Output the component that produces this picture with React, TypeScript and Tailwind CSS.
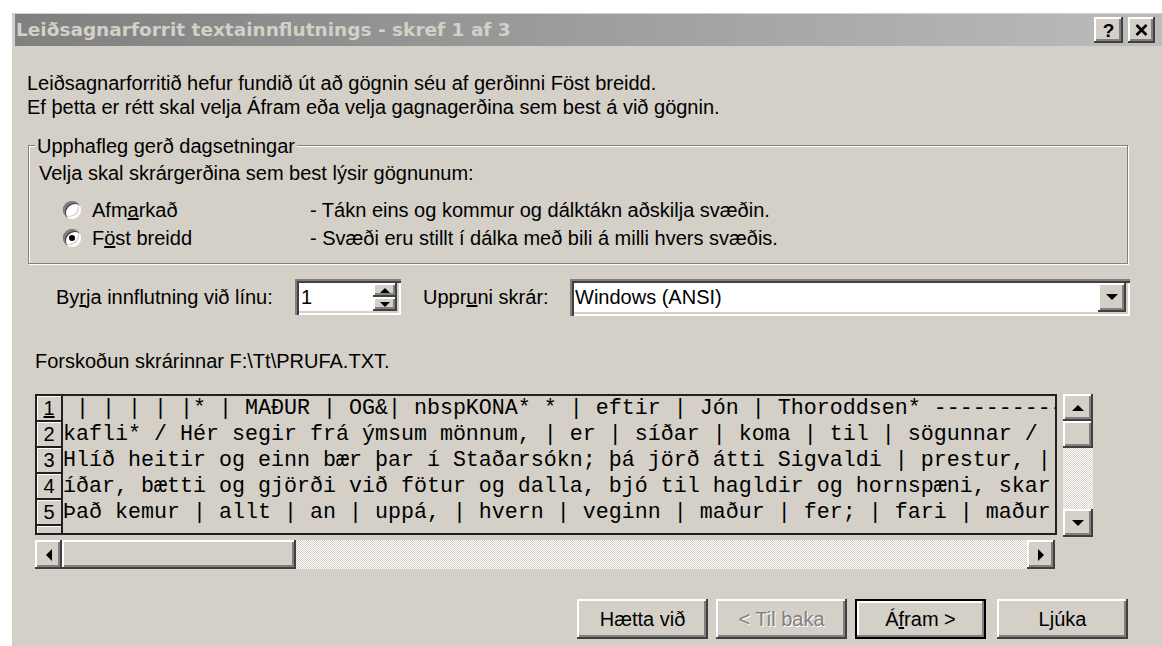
import type { ReactNode } from "react";

const sans = "font-['Liberation_Sans',Arial,sans-serif]";
const mono = "font-['Liberation_Mono','Courier_New',monospace]";

// classic 3D bevels
const raised = "bg-[#d4d0c8] shadow-[inset_-2px_-2px_0_#404040,inset_2px_2px_0_#ffffff,inset_-4px_-4px_0_#808080]";
const sunken = "bg-white shadow-[inset_2px_2px_0_#808080,inset_4px_4px_0_#404040,inset_-2px_-2px_0_#ffffff,inset_-4px_-4px_0_#d4d0c8]";
const dither = "bg-[repeating-conic-gradient(#ffffff_0_25%,#d4d0c8_0_50%)] bg-[length:2px_2px]";

const previewRows = [
  " | | | | |* | MAÐUR | OG&| nbspKONA* * | eftir | Jón | Thoroddsen* --------------",
  "kafli* / Hér segir frá ýmsum mönnum, | er | síðar | koma | til | sögunnar /  ",
  "Hlíð heitir og einn bær þar í Staðarsókn; þá jörð átti Sigvaldi | prestur, | a",
  "íðar, bætti og gjörði við fötur og dalla, bjó til hagldir og hornspæni, skar ",
  "Það kemur | allt | an | uppá, | hvern | veginn | maður | fer; | fari | maður ",
  "",
];

function Arrow({ dir, size = 12 }: { dir: "up" | "down" | "left" | "right"; size?: number }) {
  const h = Math.round(size / 2);
  if (dir === "up" || dir === "down") {
    const d = dir === "up" ? `M${size / 2} 0 L${size} ${h} L0 ${h}Z` : `M0 0 L${size} 0 L${size / 2} ${h}Z`;
    return (
      <svg width={size} height={h} viewBox={`0 0 ${size} ${h}`}>
        <path d={d} fill="#000" />
      </svg>
    );
  }
  const d = dir === "left" ? `M0 ${size / 2} L${h} 0 L${h} ${size}Z` : `M0 0 L${h} ${size / 2} L0 ${size}Z`;
  return (
    <svg width={h} height={size} viewBox={`0 0 ${h} ${size}`}>
      <path d={d} fill="#000" />
    </svg>
  );
}

function Bevel({ className = "", children }: { className?: string; children?: ReactNode }) {
  return <div className={`flex shrink-0 items-center justify-center ${raised} ${className}`}>{children}</div>;
}

function TitleBar() {
  return (
    <div className="flex h-[32px] items-center bg-linear-to-r from-[#808080] to-[#bcbcbc] pl-[1px] pr-[7px]">
      <span className="flex-1 font-['DejaVu_Sans',Verdana,sans-serif] text-[18.5px] font-bold text-[#d4d0c8]">
        Leiðsagnarforrit textainnflutnings - skref 1 af 3
      </span>
      <Bevel className="h-[26px] w-[29px]">
        <span className="text-[19px] font-bold leading-none">?</span>
      </Bevel>
      <Bevel className="ml-[5px] h-[26px] w-[27px]">
        <svg width="13" height="12" viewBox="0 0 13 12">
          <path d="M1.5 1 L11.5 11 M11.5 1 L1.5 11" stroke="#000" strokeWidth="2.6" />
        </svg>
      </Bevel>
    </div>
  );
}

function Radio({ checked }: { checked?: boolean }) {
  return (
    <div className="flex h-[18px] w-[18px] shrink-0 items-center justify-center rounded-full bg-white shadow-[inset_2px_2px_0_#808080,inset_3px_3px_0_#404040,inset_-2px_-2px_0_#ffffff,inset_-3px_-3px_0_#d4d0c8]">
      {checked && <div className="h-[6px] w-[6px] rounded-full bg-black" />}
    </div>
  );
}

function GroupBox() {
  return (
    <div className="relative ml-[13px] mt-[26px] h-[119px] w-[1100px] border border-[#808080] pl-[10px] pt-[15px] shadow-[inset_1px_1px_0_#ffffff,1px_1px_0_#ffffff]">
      <span className="absolute left-[6px] top-[-12px] bg-[#d4d0c8] px-[2px] leading-[24px]">Upphafleg gerð dagsetningar</span>
      <div className="leading-[24px]">Velja skal skrárgerðina sem best lýsir gögnunum:</div>
      <div className="mt-[11px]">
        <div className="flex h-[28px] items-center">
          <div className="ml-[24px] flex w-[247px] items-center gap-[11px]">
            <Radio />
            <span>
              Afm<u>a</u>rkað
            </span>
          </div>
          <span>- Tákn eins og kommur og dálktákn aðskilja svæðin.</span>
        </div>
        <div className="flex h-[28px] items-center">
          <div className="ml-[24px] flex w-[247px] items-center gap-[11px]">
            <Radio checked />
            <span>
              F<u>ö</u>st breidd
            </span>
          </div>
          <span>- Svæði eru stillt í dálka með bili á milli hvers svæðis.</span>
        </div>
      </div>
    </div>
  );
}

function ImportRow() {
  return (
    <div className="mt-[15px] flex h-[36px] items-center">
      <span className="ml-[41px] w-[239px]">
        By<u>r</u>ja innflutning við línu:
      </span>
      <div className={`flex h-[36px] w-[106px] items-stretch p-[4px] ${sunken}`}>
        <span className="flex-1 pl-[2px] leading-[28px]">1</span>
        <div className="flex w-[24px] flex-col">
          <Bevel className="flex-1">
            <Arrow dir="up" size={10} />
          </Bevel>
          <Bevel className="flex-1">
            <Arrow dir="down" size={10} />
          </Bevel>
        </div>
      </div>
      <span className="ml-[22px] w-[147px]">
        Uppr<u>u</u>ni skrár:
      </span>
      <div className={`flex h-[37px] w-[560px] items-stretch p-[4px] ${sunken}`}>
        <span className="flex-1 pl-[1px] leading-[29px]">Windows (ANSI)</span>
        <Bevel className="w-[28px]">
          <Arrow dir="down" size={12} />
        </Bevel>
      </div>
    </div>
  );
}

function Preview() {
  return (
    <div className="ml-[20px] mt-[21px] flex items-start">
      <div className="h-[141px] w-[1022px] overflow-hidden border-2 border-[#202020]">
        {previewRows.map((row, i) => (
          <div key={i} className="flex h-[26px]">
            <div className="flex w-[26px] shrink-0 items-center justify-center border-b-2 border-r-2 border-[#202020] shadow-[inset_1px_1px_0_#ffffff]">
              {i < 5 && (i === 0 ? <u>1</u> : <span>{i + 1}</span>)}
            </div>
            <div className={`whitespace-pre text-[21.67px] leading-[26px] ${mono}`}>{row}</div>
          </div>
        ))}
      </div>
      <div className="ml-[6px] flex h-[143px] w-[30px] flex-col">
        <Bevel className="h-[27px]">
          <Arrow dir="up" />
        </Bevel>
        <Bevel className="h-[27px]" />
        <div className={`flex-1 ${dither}`} />
        <Bevel className="h-[28px]">
          <Arrow dir="down" />
        </Bevel>
      </div>
    </div>
  );
}

function HScroll() {
  return (
    <div className="ml-[20px] mt-[3px] flex h-[29px] w-[1022px]">
      <Bevel className="w-[27px]">
        <Arrow dir="left" />
      </Bevel>
      <Bevel className="w-[234px]" />
      <div className={`flex-1 ${dither}`} />
      <Bevel className="w-[28px]">
        <Arrow dir="right" />
      </Bevel>
      <div className="w-[2px]" />
    </div>
  );
}

function WizardButtons() {
  const btn = `flex h-[40px] w-[131px] items-center justify-center ${raised}`;
  return (
    <div className="ml-[562px] mt-[30px] flex">
      <div className={btn}>Hætta við</div>
      <div className={`${btn} ml-[8px] text-[#808080] [text-shadow:1px_1px_0_#ffffff]`}>&lt; Til baka</div>
      <div className="ml-[8px] flex h-[40px] w-[131px] items-center justify-center border-2 border-black bg-[#d4d0c8] shadow-[inset_-2px_-2px_0_#808080,inset_2px_2px_0_#ffffff]">
        Á<u>f</u>ram &gt;
      </div>
      <div className={`${btn} ml-[11px]`}>
        L<u>j</u>úka
      </div>
    </div>
  );
}

export default function App() {
  return (
    <div className="h-[646px] w-[1162px] overflow-hidden bg-white pl-[11px] pt-[12px]">
      <div className={`h-[634px] w-[1151px] bg-[#d4d0c8] pl-[4px] pt-[2px] text-[20px] text-black shadow-[inset_1px_1px_0_#ffffff] ${sans}`}>
        <TitleBar />
        <div className="pt-[25px]">
          <p className="ml-[12px] leading-[24px]">
            Leiðsagnarforritið hefur fundið út að gögnin séu af gerðinni Föst breidd.
            <br />
            Ef þetta er rétt skal velja Áfram eða velja gagnagerðina sem best á við gögnin.
          </p>
          <GroupBox />
          <ImportRow />
          <div className="ml-[20px] mt-[34px] leading-[24px]">Forskoðun skrárinnar F:\Tt\PRUFA.TXT.</div>
          <Preview />
          <HScroll />
          <WizardButtons />
        </div>
      </div>
    </div>
  );
}
